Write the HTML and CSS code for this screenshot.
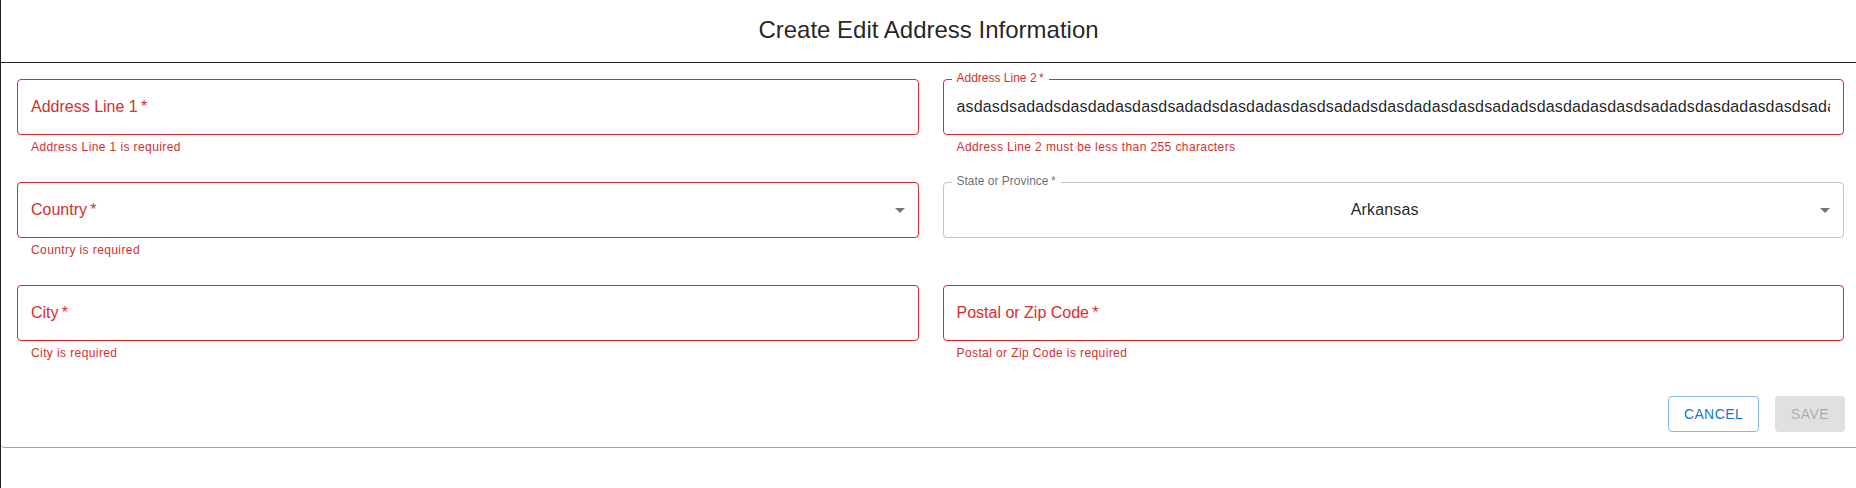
FILE: index.html
```html
<!DOCTYPE html>
<html lang="en">
<head>
<meta charset="utf-8">
<title>Create Edit Address Information</title>
<link rel="stylesheet" href="styles.css">
</head>
<body>
<div class="page">
  <div class="dialog">
    <h2 class="title">Create Edit Address Information</h2>
    <div class="content">
      <div class="cell">
        <div class="field error">
          <span class="placeholder">Address Line 1&thinsp;*</span>
          <fieldset class="outline"><legend></legend></fieldset>
        </div>
        <p class="helper">Address Line 1 is required</p>
      </div>
      <div class="cell">
        <div class="field error">
          <label class="float-label">Address Line 2&thinsp;*</label>
          <div class="value">asdasdsadadsdasdadasdasdsadadsdasdadasdasdsadadsdasdadasdasdsadadsdasdadasdasdsadadsdasdadasdasdsadadsdasdadasdasdsadadsdasdadasdasdsadadsdasdadasdasdsadadsdasdadasdasdsadadsdasdadasdasdsadadsdasdadasdasdsadadsdasdadasdasdsadadsdasdadasdasdsadadsdasdad</div>
          <fieldset class="outline"><legend><span>Address Line 2&thinsp;*</span></legend></fieldset>
        </div>
        <p class="helper">Address Line 2 must be less than 255 characters</p>
      </div>
      <div class="cell">
        <div class="field select error">
          <span class="placeholder">Country&thinsp;*</span>
          <svg class="arrow" viewBox="0 0 24 24" width="24" height="24"><path d="M7 10l5 5 5-5z"/></svg>
          <fieldset class="outline"><legend></legend></fieldset>
        </div>
        <p class="helper">Country is required</p>
      </div>
      <div class="cell">
        <div class="field select">
          <label class="float-label">State or Province&thinsp;*</label>
          <div class="value center">Arkansas</div>
          <svg class="arrow" viewBox="0 0 24 24" width="24" height="24"><path d="M7 10l5 5 5-5z"/></svg>
          <fieldset class="outline"><legend><span>State or Province&thinsp;*</span></legend></fieldset>
        </div>
      </div>
      <div class="cell">
        <div class="field error">
          <span class="placeholder">City&thinsp;*</span>
          <fieldset class="outline"><legend></legend></fieldset>
        </div>
        <p class="helper">City is required</p>
      </div>
      <div class="cell">
        <div class="field error">
          <span class="placeholder">Postal or Zip Code&thinsp;*</span>
          <fieldset class="outline"><legend></legend></fieldset>
        </div>
        <p class="helper">Postal or Zip Code is required</p>
      </div>
    </div>
    <div class="actions">
      <button class="btn outlined" type="button">Cancel</button>
      <button class="btn disabled" type="button" disabled>Save</button>
    </div>
  </div>
</div>
</body>
</html>
```

FILE: styles.css
```css
* { box-sizing: border-box; }

html, body {
  margin: 0;
  padding: 0;
  background: #ffffff;
  font-family: "Liberation Sans", Arial, Helvetica, sans-serif;
}

.page {
  min-height: 100vh;
  border-left: 1px solid #222222;
}

.dialog {
  border-bottom: 1px solid #a3a3a3;
  border-bottom-left-radius: 4px;
}

.title {
  margin: 0;
  height: 63px;
  padding: 14px 24px 0;
  font-size: 24px;
  line-height: 32px;
  font-weight: 400;
  text-align: center;
  color: rgba(0, 0, 0, 0.87);
  border-bottom: 1px solid #222222;
}

.content {
  display: grid;
  grid-template-columns: 1fr 1fr;
  column-gap: 24px;
  row-gap: 24px;
  align-items: start;
  padding: 16px 12px 0 16px;
}

.cell {
  min-width: 0;
}

.field {
  position: relative;
  height: 56px;
  display: flex;
  align-items: center;
  padding: 0 14px;
  font-size: 16px;
  border-radius: 4px;
}

.field.select {
  padding: 0 7px 0 14px;
}

.placeholder {
  flex: 1;
  color: rgba(0, 0, 0, 0.6);
  white-space: nowrap;
}

.field.error .placeholder,
.field.error .float-label {
  color: #d32f2f;
}

.value {
  flex: 1;
  min-width: 0;
  overflow: hidden;
  white-space: nowrap;
  color: rgba(0, 0, 0, 0.87);
  letter-spacing: 0.00938em;
}

.value.center {
  text-align: center;
}

.arrow {
  flex: none;
  fill: rgba(0, 0, 0, 0.54);
}

.float-label {
  position: absolute;
  left: 14px;
  top: -9px;
  font-size: 12px;
  line-height: 17px;
  color: rgba(0, 0, 0, 0.6);
  white-space: nowrap;
}

.outline {
  position: absolute;
  top: -5px;
  left: 0;
  right: 0;
  bottom: 0;
  margin: 0;
  padding: 0 8px;
  min-width: 0;
  border: 1px solid rgba(0, 0, 0, 0.23);
  border-radius: 4px;
  pointer-events: none;
  text-align: left;
}

.field.error .outline {
  border-color: #d32f2f;
}

.outline legend {
  padding: 0;
  height: 11px;
  font-size: 12px;
  line-height: 11px;
  visibility: hidden;
  white-space: nowrap;
  max-width: 100%;
}

.outline legend span {
  display: inline-block;
  padding: 0 5px;
}

.helper {
  margin: 3px 14px 0;
  font-size: 12px;
  line-height: 1.66;
  letter-spacing: 0.03333em;
  color: #d32f2f;
}

.actions {
  display: flex;
  justify-content: flex-end;
  align-items: center;
  gap: 16px;
  padding: 32px 11px 15px 0;
}

.btn {
  font-family: "Liberation Sans", Arial, Helvetica, sans-serif;
  font-size: 14px;
  font-weight: 400;
  line-height: 1.75;
  letter-spacing: 0.02857em;
  text-transform: uppercase;
  min-width: 64px;
  border-radius: 4px;
  background: transparent;
}

.btn.outlined {
  padding: 5px 15px;
  color: #1976d2;
  border: 1px solid rgba(25, 118, 210, 0.5);
}

.btn.disabled {
  padding: 6px 16px;
  border: 0;
  color: rgba(0, 0, 0, 0.26);
  background: rgba(0, 0, 0, 0.12);
}
```
